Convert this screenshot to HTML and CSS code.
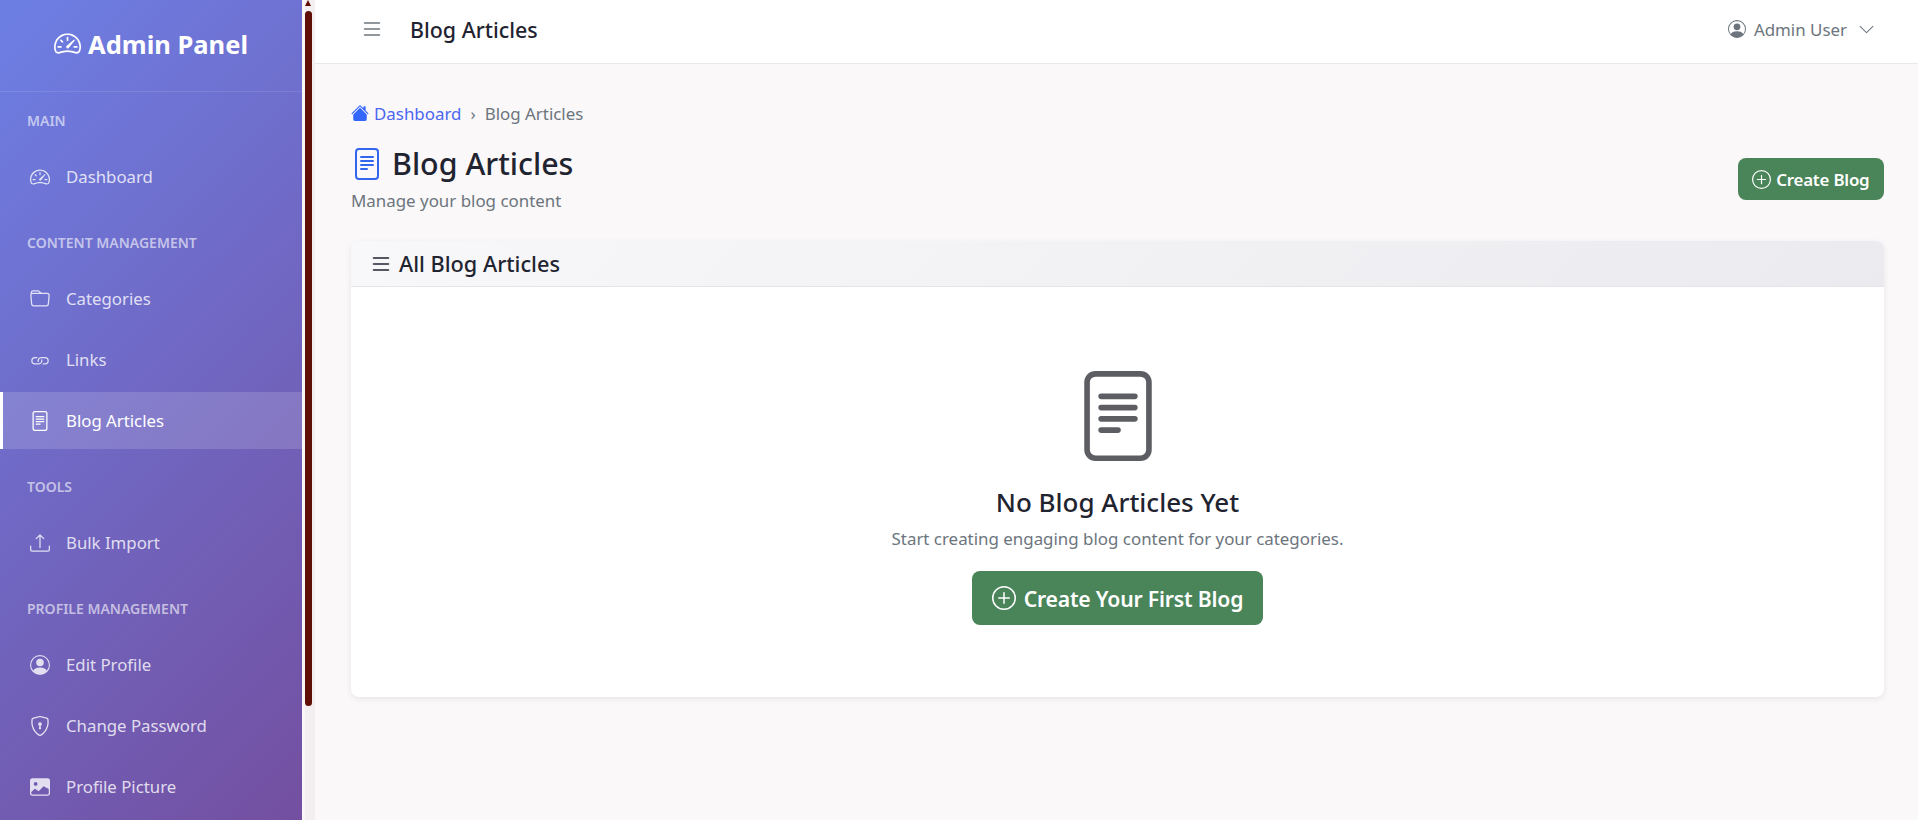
FILE: index.html
```html
<!DOCTYPE html>
<html lang="en">
<head>
    <meta charset="UTF-8">
    <meta name="viewport" content="width=device-width, initial-scale=1.0">
    <title>Blog Articles</title>
    <link rel="stylesheet" href="styles.css">
</head>
<body>
    <!-- Icon set -->
    <svg class="icon-defs" xmlns="http://www.w3.org/2000/svg">
        <symbol id="i-speedometer" viewBox="0 0 16 16">
            <path d="M8 4a.5.5 0 0 1 .5.5V6a.5.5 0 0 1-1 0V4.5A.5.5 0 0 1 8 4M3.732 5.732a.5.5 0 0 1 .707 0l.915.914a.5.5 0 1 1-.708.708l-.914-.915a.5.5 0 0 1 0-.707M2 10a.5.5 0 0 1 .5-.5h1.586a.5.5 0 0 1 0 1H2.5A.5.5 0 0 1 2 10m9.5 0a.5.5 0 0 1 .5-.5h1.5a.5.5 0 0 1 0 1H12a.5.5 0 0 1-.5-.5m.754-4.246a.39.39 0 0 0-.527-.02L7.547 9.31a.91.91 0 1 0 1.302 1.258l3.434-4.297a.39.39 0 0 0-.029-.518z"/>
            <path fill-rule="evenodd" d="M0 10a8 8 0 1 1 15.547 2.661c-.442 1.253-1.845 1.602-2.932 1.25C11.309 13.488 9.475 13 8 13c-1.474 0-3.31.488-4.615.911-1.087.352-2.49.003-2.932-1.25A8 8 0 0 1 0 10m8-7a7 7 0 0 0-6.603 9.329c.203.575.923.876 1.68.63C4.397 12.533 6.358 12 8 12s3.604.532 4.923.96c.757.245 1.477-.056 1.68-.631A7 7 0 0 0 8 3"/>
        </symbol>
        <symbol id="i-folder" viewBox="0 0 16 16">
            <path d="M.54 3.87.5 3a2 2 0 0 1 2-2h3.672a2 2 0 0 1 1.414.586l.828.828A2 2 0 0 0 9.828 3h3.982a2 2 0 0 1 1.992 2.181l-.637 7A2 2 0 0 1 13.174 14H2.826a2 2 0 0 1-1.991-1.819l-.637-7a2 2 0 0 1 .342-1.31zM2.19 4a1 1 0 0 0-.996 1.09l.637 7a1 1 0 0 0 .995.91h10.348a1 1 0 0 0 .995-.91l.637-7A1 1 0 0 0 13.81 4zm4.69-1.707A1 1 0 0 0 6.172 2H2.5a1 1 0 0 0-1 .981l.006.139q.323-.119.684-.12h5.396z"/>
        </symbol>
        <symbol id="i-link" viewBox="0 0 16 16">
            <path d="M6.354 5.5H4a3 3 0 0 0 0 6h3a3 3 0 0 0 2.83-4H9q-.13 0-.25.031A2 2 0 0 1 7 10.5H4a2 2 0 1 1 0-4h1.535c.218-.376.495-.714.82-1z"/>
            <path d="M9 5.5a3 3 0 0 0-2.83 4h1.098A2 2 0 0 1 9 6.5h3a2 2 0 1 1 0 4h-1.535a4 4 0 0 1-.82 1H12a3 3 0 1 0 0-6z"/>
        </symbol>
        <symbol id="i-file-text" viewBox="0 0 16 16">
            <path d="M5 4a.5.5 0 0 0 0 1h6a.5.5 0 0 0 0-1zm-.5 2.5A.5.5 0 0 1 5 6h6a.5.5 0 0 1 0 1H5a.5.5 0 0 1-.5-.5M5 8a.5.5 0 0 0 0 1h6a.5.5 0 0 0 0-1zm0 2a.5.5 0 0 0 0 1h3a.5.5 0 0 0 0-1z"/>
            <path d="M2 2a2 2 0 0 1 2-2h8a2 2 0 0 1 2 2v12a2 2 0 0 1-2 2H4a2 2 0 0 1-2-2zm10-1H4a1 1 0 0 0-1 1v12a1 1 0 0 0 1 1h8a1 1 0 0 0 1-1V2a1 1 0 0 0-1-1"/>
        </symbol>
        <symbol id="i-upload" viewBox="0 0 16 16">
            <path d="M.5 9.9a.5.5 0 0 1 .5.5v2.5a1 1 0 0 0 1 1h12a1 1 0 0 0 1-1v-2.5a.5.5 0 0 1 1 0v2.5a2 2 0 0 1-2 2H2a2 2 0 0 1-2-2v-2.5a.5.5 0 0 1 .5-.5"/>
            <path d="M7.646 1.146a.5.5 0 0 1 .708 0l3 3a.5.5 0 0 1-.708.708L8.5 2.707V11.5a.5.5 0 0 1-1 0V2.707L5.354 4.854a.5.5 0 1 1-.708-.708z"/>
        </symbol>
        <symbol id="i-person" viewBox="0 0 16 16">
            <path d="M11 6a3 3 0 1 1-6 0 3 3 0 0 1 6 0"/>
            <path fill-rule="evenodd" d="M0 8a8 8 0 1 1 16 0A8 8 0 0 1 0 8m8-7a7 7 0 0 0-5.468 11.37C3.242 11.226 4.805 10 8 10s4.757 1.225 5.468 2.37A7 7 0 0 0 8 1"/>
        </symbol>
        <symbol id="i-shield" viewBox="0 0 16 16">
            <path d="M5.338 1.59a61 61 0 0 0-2.837.856.48.48 0 0 0-.328.39c-.554 4.157.726 7.19 2.253 9.188a10.7 10.7 0 0 0 2.287 2.233c.346.244.652.42.893.533q.18.085.293.118a1 1 0 0 0 .101.025 1 1 0 0 0 .1-.025q.114-.034.294-.118c.24-.113.547-.29.893-.533a10.7 10.7 0 0 0 2.287-2.233c1.527-1.997 2.807-5.031 2.253-9.188a.48.48 0 0 0-.328-.39c-.651-.213-1.75-.56-2.837-.855C9.552 1.29 8.531 1.067 8 1.067c-.53 0-1.552.223-2.662.524zM5.072.56C6.157.265 7.31 0 8 0s1.843.265 2.928.56c1.11.3 2.229.655 2.887.87a1.54 1.54 0 0 1 1.044 1.262c.596 4.477-.787 7.795-2.465 9.99a11.8 11.8 0 0 1-2.517 2.453 7 7 0 0 1-1.048.625c-.28.132-.581.24-.829.24s-.548-.108-.829-.24a7 7 0 0 1-1.048-.625 11.8 11.8 0 0 1-2.517-2.453C1.928 10.487.545 7.169 1.141 2.692A1.54 1.54 0 0 1 2.185 1.43 63 63 0 0 1 5.072.56"/>
            <path d="M9.5 6.5a1.5 1.5 0 0 1-1 1.415l.385 1.99a.5.5 0 0 1-.491.595h-.788a.5.5 0 0 1-.49-.595l.384-1.99a1.5 1.5 0 1 1 2-1.415"/>
        </symbol>
        <symbol id="i-image" viewBox="0 0 16 16">
            <path d="M.002 3a2 2 0 0 1 2-2h12a2 2 0 0 1 2 2v10a2 2 0 0 1-2 2h-12a2 2 0 0 1-2-2zm1 9v1a1 1 0 0 0 1 1h12a1 1 0 0 0 1-1V9.5l-3.777-1.947a.5.5 0 0 0-.577.093l-3.71 3.71-2.66-1.772a.5.5 0 0 0-.63.062zm5-6.5a1.5 1.5 0 1 0-3 0 1.5 1.5 0 0 0 3 0"/>
        </symbol>
        <symbol id="i-house" viewBox="0 0 16 16">
            <path d="M8.707 1.5a1 1 0 0 0-1.414 0L.646 8.146a.5.5 0 0 0 .708.708L8 2.207l6.646 6.647a.5.5 0 0 0 .708-.708L13 5.793V2.5a.5.5 0 0 0-.5-.5h-1a.5.5 0 0 0-.5.5v1.293z"/>
            <path d="m8 3.293 6 6V13.5a1.5 1.5 0 0 1-1.5 1.5h-9A1.5 1.5 0 0 1 2 13.5V9.293z"/>
        </symbol>
        <symbol id="i-list" viewBox="0 0 16 16">
            <path fill-rule="evenodd" d="M2.5 12a.5.5 0 0 1 .5-.5h10a.5.5 0 0 1 0 1H3a.5.5 0 0 1-.5-.5m0-4a.5.5 0 0 1 .5-.5h10a.5.5 0 0 1 0 1H3a.5.5 0 0 1-.5-.5m0-4a.5.5 0 0 1 .5-.5h10a.5.5 0 0 1 0 1H3a.5.5 0 0 1-.5-.5"/>
        </symbol>
        <symbol id="i-chevron" viewBox="0 0 16 16">
            <path fill-rule="evenodd" d="M1.646 4.646a.5.5 0 0 1 .708 0L8 10.293l5.646-5.647a.5.5 0 0 1 .708.708l-6 6a.5.5 0 0 1-.708 0l-6-6a.5.5 0 0 1 0-.708"/>
        </symbol>
        <symbol id="i-plus" viewBox="0 0 16 16">
            <path d="M8 15A7 7 0 1 1 8 1a7 7 0 0 1 0 14m0 1A8 8 0 1 0 8 0a8 8 0 0 0 0 16"/>
            <path d="M8 4a.5.5 0 0 1 .5.5v3h3a.5.5 0 0 1 0 1h-3v3a.5.5 0 0 1-1 0v-3h-3a.5.5 0 0 1 0-1h3v-3A.5.5 0 0 1 8 4"/>
        </symbol>
    </svg>

    <div class="layout">
        <!-- Sidebar -->
        <aside class="sidebar">
            <div class="sidebar-brand">
                <svg class="icon brand-icon"><use href="#i-speedometer"/></svg>
                <span>Admin Panel</span>
            </div>

            <div class="nav-section">Main</div>
            <a class="nav-item" href="#"><svg class="icon"><use href="#i-speedometer"/></svg>Dashboard</a>

            <div class="nav-section">Content Management</div>
            <a class="nav-item" href="#"><svg class="icon"><use href="#i-folder"/></svg>Categories</a>
            <a class="nav-item" href="#"><svg class="icon"><use href="#i-link"/></svg>Links</a>
            <a class="nav-item active" href="#"><svg class="icon"><use href="#i-file-text"/></svg>Blog Articles</a>

            <div class="nav-section">Tools</div>
            <a class="nav-item" href="#"><svg class="icon"><use href="#i-upload"/></svg>Bulk Import</a>

            <div class="nav-section">Profile Management</div>
            <a class="nav-item" href="#"><svg class="icon"><use href="#i-person"/></svg>Edit Profile</a>
            <a class="nav-item" href="#"><svg class="icon"><use href="#i-shield"/></svg>Change Password</a>
            <a class="nav-item" href="#"><svg class="icon"><use href="#i-image"/></svg>Profile Picture</a>
        </aside>

        <!-- Sidebar scrollbar -->
        <div class="scroll-track">
            <div class="scroll-arrow"></div>
            <div class="scroll-thumb"></div>
        </div>

        <div class="main">
            <header class="topbar">
                <div class="topbar-left">
                    <svg class="icon toggle-icon"><use href="#i-list"/></svg>
                    <span class="topbar-title">Blog Articles</span>
                </div>
                <div class="topbar-user">
                    <svg class="icon user-icon"><use href="#i-person"/></svg>
                    <span>Admin User</span>
                    <svg class="icon chevron-icon"><use href="#i-chevron"/></svg>
                </div>
            </header>

            <main class="content">
                <nav class="breadcrumb">
                    <a href="#"><svg class="icon house-icon"><use href="#i-house"/></svg>Dashboard</a>
                    <span class="crumb-sep">›</span>
                    <span>Blog Articles</span>
                </nav>

                <div class="page-head">
                    <div>
                        <h1 class="page-title"><svg class="icon title-icon"><use href="#i-file-text"/></svg>Blog Articles</h1>
                        <p class="page-sub">Manage your blog content</p>
                    </div>
                    <a class="btn" href="#"><svg class="icon"><use href="#i-plus"/></svg>Create Blog</a>
                </div>

                <section class="card">
                    <div class="card-header">
                        <svg class="icon card-icon"><use href="#i-list"/></svg>
                        <h2>All Blog Articles</h2>
                    </div>
                    <div class="empty">
                        <svg class="icon empty-icon"><use href="#i-file-text"/></svg>
                        <h3>No Blog Articles Yet</h3>
                        <p>Start creating engaging blog content for your categories.</p>
                        <a class="btn btn-lg" href="#"><svg class="icon"><use href="#i-plus"/></svg>Create Your First Blog</a>
                    </div>
                </section>
            </main>
        </div>
    </div>
</body>
</html>
```

FILE: styles.css
```css
/* General styling */
* {
    box-sizing: border-box;
}

body {
    margin: 0;
    height: 820px;
    overflow: hidden;
    font-family: "Noto Sans", "Open Sans", sans-serif;
    font-size: 16.9px;
    color: #1f2430;
    background-color: #faf8f9;
}

a {
    text-decoration: none;
}

.icon-defs {
    display: none;
}

.icon {
    width: 1em;
    height: 1em;
    fill: currentColor;
    flex-shrink: 0;
}

.layout {
    display: flex;
    height: 820px;
}

/* Sidebar */
.sidebar {
    width: 302px;
    height: 820px;
    overflow: hidden;
    flex-shrink: 0;
    color: rgba(255, 255, 255, 0.8);
    background: linear-gradient(135deg, #6d7fe4 0%, #734fa0 100%);
}

.sidebar-brand {
    display: flex;
    align-items: center;
    justify-content: center;
    gap: 7px;
    height: 92px;
    padding-bottom: 4px;
    border-bottom: 1px solid rgba(255, 255, 255, 0.1);
    font-size: 25.5px;
    font-weight: 700;
    color: #fff;
}

.brand-icon {
    font-size: 27px;
}

.nav-section {
    height: 18px;
    margin: 20px 0 18px;
    padding-left: 27px;
    font-size: 14px;
    line-height: 18px;
    font-weight: 600;
    text-transform: uppercase;
    color: rgba(255, 255, 255, 0.6);
}

.nav-item + .nav-section {
    margin-top: 29px;
}

.nav-item {
    display: flex;
    align-items: center;
    gap: 16px;
    height: 57px;
    margin-bottom: 4px;
    padding-left: 30px;
    font-size: 16.8px;
    color: rgba(255, 255, 255, 0.8);
}

.nav-item .icon {
    font-size: 20px;
}

.nav-item.active {
    padding-left: 27px;
    border-left: 3px solid #fff;
    color: #fff;
    background-color: rgba(255, 255, 255, 0.15);
}

/* Scrollbar strip beside the sidebar */
.scroll-track {
    width: 13px;
    flex-shrink: 0;
    padding: 0 3px;
    background: linear-gradient(90deg, #f8f6f6 3px, #f3eff0 3px);
}

.scroll-arrow {
    width: 0;
    height: 0;
    margin: 0 0 5px;
    border-left: 3.5px solid transparent;
    border-right: 3.5px solid transparent;
    border-bottom: 6px solid #5f0f05;
}

.scroll-thumb {
    width: 7px;
    height: 695px;
    border-radius: 3.5px;
    background-color: #5f0f05;
}

/* Main area */
.main {
    flex: 1;
    min-width: 0;
}

.topbar {
    display: flex;
    align-items: center;
    justify-content: space-between;
    height: 64px;
    padding: 0 43px 5px 45px;
    border-bottom: 1px solid #e9e9ea;
    background-color: #fff;
}

.topbar-left {
    display: flex;
    align-items: center;
    gap: 26px;
}

.toggle-icon {
    font-size: 24px;
    color: #6c757d;
}

.topbar-title {
    font-size: 21.4px;
    font-weight: 500;
}

.topbar-user {
    display: flex;
    align-items: center;
    gap: 8px;
    color: #6c757d;
}

.user-icon {
    font-size: 18px;
}

.chevron-icon {
    margin-left: 3px;
    font-size: 17px;
}

.content {
    padding: 37px 34px 0 36px;
}

.breadcrumb {
    display: flex;
    align-items: center;
    gap: 9px;
    height: 24px;
    color: #6c757d;
}

.breadcrumb a {
    display: flex;
    align-items: center;
    gap: 5px;
    color: #4a66f0;
}

.house-icon {
    font-size: 18px;
    color: #3366ff;
}

.page-head {
    display: flex;
    align-items: flex-end;
    justify-content: space-between;
    margin-top: 17px;
}

.page-title {
    display: flex;
    align-items: center;
    gap: 9px;
    margin: 0;
    font-size: 30.4px;
    line-height: 44px;
    font-weight: 500;
}

.title-icon {
    font-size: 32px;
    color: #3366ee;
}

.page-sub {
    margin: 3px 0 0;
    line-height: 24px;
    color: #6c757d;
}

.btn {
    display: inline-flex;
    align-items: center;
    justify-content: center;
    gap: 5px;
    height: 42px;
    padding: 0 14.5px;
    border-radius: 8px;
    font-weight: 600;
    letter-spacing: -0.2px;
    color: #fff;
    background-color: #4a8459;
}

.page-head .btn {
    margin-bottom: 13px;
}

.btn .icon {
    font-size: 19px;
}

.btn-lg {
    gap: 8px;
    height: 54px;
    padding: 0 20px;
    font-size: 21.2px;
}

.btn-lg .icon {
    font-size: 24px;
}

/* Card */
.card {
    margin-top: 28px;
    border-radius: 8px;
    background-color: #fff;
    box-shadow: 0 2px 6px rgba(0, 0, 0, 0.08);
}

.card-header {
    display: flex;
    align-items: center;
    gap: 6px;
    height: 46px;
    padding: 0 18px;
    border-bottom: 1px solid #e4e4e7;
    border-radius: 8px 8px 0 0;
    background: linear-gradient(135deg, #f8f7f9 0%, #ebeaee 100%);
}

.card-icon {
    font-size: 24px;
    color: #1f2430;
}

.card-header h2 {
    margin: 0;
    font-size: 21.7px;
    font-weight: 500;
}

.empty {
    display: flex;
    flex-direction: column;
    align-items: center;
    height: 410px;
    padding-top: 84px;
}

.empty-icon {
    font-size: 90px;
    color: #5c5e63;
}

.empty h3 {
    margin: 25px 0 0;
    font-size: 26px;
    line-height: 32px;
    font-weight: 500;
}

.empty p {
    margin: 9px 0 20px;
    line-height: 24px;
    color: #6c757d;
}
```
